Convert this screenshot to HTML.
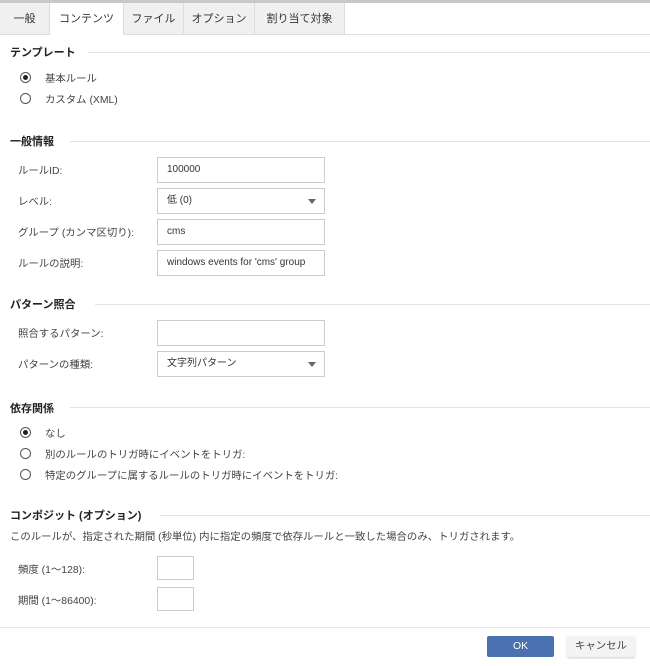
<!DOCTYPE html>
<html><head><meta charset="utf-8"><style>
*{margin:0;padding:0;box-sizing:border-box}
body{width:650px;height:666px;background:#fff;font-family:"Liberation Sans","Noto Sans CJK JP",sans-serif;font-size:10.4px;color:#444;position:relative;overflow:hidden}
.a{position:absolute;white-space:nowrap}
.tab{position:absolute;top:3px;height:32px;line-height:32px;text-align:center;background:#f0f0f0;border-right:1px solid #ddd;border-bottom:1px solid #ddd;color:#333;font-size:11px}
.h{position:absolute;left:10px;font-weight:bold;font-size:11px;color:#222}
.ln{position:absolute;height:1px;background:#e3e3e3;right:0}
.in{position:absolute;left:157px;width:168px;height:26px;border:1px solid #ccc;background:#fff;padding-left:9px;padding-top:6px;line-height:12px;font-size:10px;color:#333}
.sm{position:absolute;left:157px;width:37px;height:24px;border:1px solid #ccc}
.r{position:absolute;left:20px;width:11px;height:11px;border:1px solid #555;border-radius:50%}
.r.on::after{content:"";position:absolute;left:2px;top:2px;width:5px;height:5px;border-radius:50%;background:#222}
.car{position:absolute;right:8px;top:10px;width:0;height:0;border-left:4px solid transparent;border-right:4px solid transparent;border-top:5px solid #666}
</style></head><body>
<div class="a" style="left:0;top:0;width:650px;height:3px;background:#c8c8c8"></div>
<div class="a" style="left:0;top:34px;width:650px;height:1px;background:#ddd"></div>
<div class="tab" style="left:0;width:50px">一般</div>
<div class="tab" style="left:50px;width:74px;background:#fff;border-bottom-color:#fff">コンテンツ</div>
<div class="tab" style="left:124px;width:60px">ファイル</div>
<div class="tab" style="left:184px;width:71px">オプション</div>
<div class="tab" style="left:255px;width:90px">割り当て対象</div>

<div class="h" style="top:44px">テンプレート</div><div class="ln" style="left:88px;top:52px"></div>
<div class="r on" style="top:72px"></div><div class="a" style="left:45px;top:70px">基本ルール</div>
<div class="r" style="top:93px"></div><div class="a" style="left:45px;top:91px">カスタム (XML)</div>

<div class="h" style="top:133px">一般情報</div><div class="ln" style="left:70px;top:141px"></div>
<div class="a" style="left:18px;top:162px">ルールID:</div><div class="in" style="top:157px">100000</div>
<div class="a" style="left:18px;top:193px">レベル:</div><div class="in" style="top:188px">低 (0)<span class="car"></span></div>
<div class="a" style="left:18px;top:224px">グループ (カンマ区切り):</div><div class="in" style="top:219px">cms</div>
<div class="a" style="left:18px;top:255px">ルールの説明:</div><div class="in" style="top:250px">windows events for 'cms' group</div>

<div class="h" style="top:296px">パターン照合</div><div class="ln" style="left:95px;top:304px"></div>
<div class="a" style="left:18px;top:325px">照合するパターン:</div><div class="in" style="top:320px"></div>
<div class="a" style="left:18px;top:356px">パターンの種類:</div><div class="in" style="top:351px">文字列パターン<span class="car"></span></div>

<div class="h" style="top:400px">依存関係</div><div class="ln" style="left:70px;top:407px"></div>
<div class="r on" style="top:427px"></div><div class="a" style="left:45px;top:425px">なし</div>
<div class="r" style="top:448px"></div><div class="a" style="left:45px;top:446px">別のルールのトリガ時にイベントをトリガ:</div>
<div class="r" style="top:469px"></div><div class="a" style="left:45px;top:467px">特定のグループに属するルールのトリガ時にイベントをトリガ:</div>

<div class="h" style="top:507px">コンポジット (オプション)</div><div class="ln" style="left:160px;top:515px"></div>
<div class="a" style="left:10px;top:528px;font-size:10.4px">このルールが、指定された期間 (秒単位) 内に指定の頻度で依存ルールと一致した場合のみ、トリガされます。</div>
<div class="a" style="left:18px;top:561px">頻度 (1～128):</div><div class="sm" style="top:556px"></div>
<div class="a" style="left:18px;top:592px">期間 (1～86400):</div><div class="sm" style="top:587px"></div>

<div class="a" style="left:0;top:627px;width:650px;height:1px;background:#e8e8e8"></div>
<div class="a" style="left:487px;top:636px;width:67px;height:21px;background:#4a72b0;border-radius:2px;color:#fff;text-align:center;line-height:21px">OK</div>
<div class="a" style="left:567px;top:636px;width:68px;height:21px;background:#f3f3f3;border-radius:2px;box-shadow:0 1px 2px rgba(0,0,0,.2);text-align:center;line-height:21px">キャンセル</div>
</body></html>
